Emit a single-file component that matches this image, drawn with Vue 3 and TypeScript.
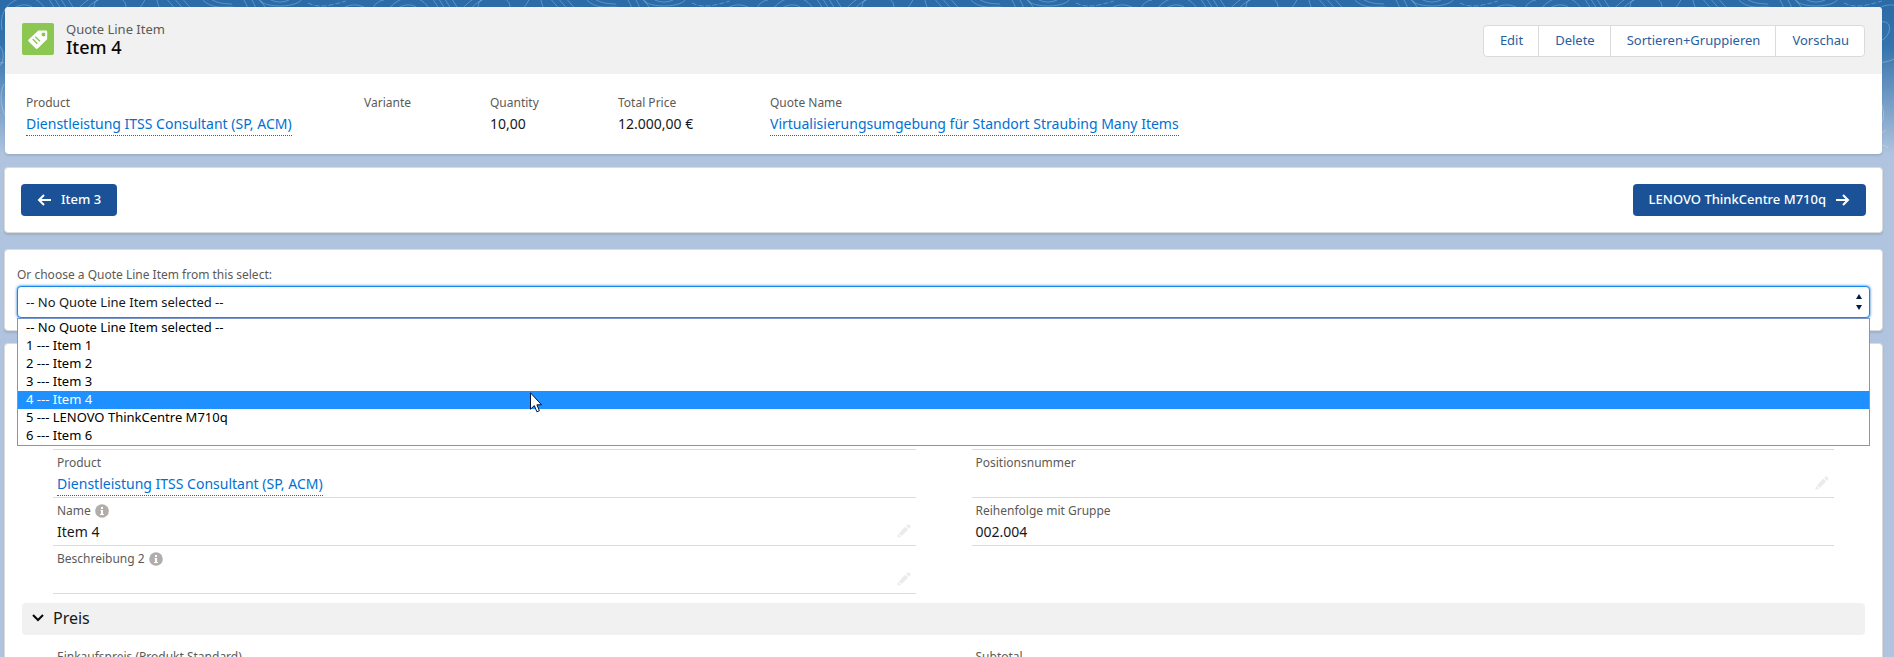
<script setup lang="ts">
import { ref } from 'vue'

interface Field { label: string; value?: string; link?: boolean; info?: boolean; edit?: boolean }

const highlights: Field[] = [
  { label: 'Product', value: 'Dienstleistung ITSS Consultant (SP, ACM)', link: true },
  { label: 'Variante' },
  { label: 'Quantity', value: '10,00' },
  { label: 'Total Price', value: '12.000,00 €' },
  { label: 'Quote Name', value: 'Virtualisierungsumgebung für Standort Straubing Many Items', link: true },
]
const actions = ['Edit', 'Delete', 'Sortieren+Gruppieren', 'Vorschau']
const options = [
  '-- No Quote Line Item selected --',
  '1 --- Item 1',
  '2 --- Item 2',
  '3 --- Item 3',
  '4 --- Item 4',
  '5 --- LENOVO ThinkCentre M710q',
  '6 --- Item 6',
]
const selected = ref(options[0])
const active = ref(4)
const columns: Field[][] = [
  [
    { label: 'Product', value: 'Dienstleistung ITSS Consultant (SP, ACM)', link: true },
    { label: 'Name', value: 'Item 4', info: true, edit: true },
    { label: 'Beschreibung 2', info: true, edit: true },
  ],
  [
    { label: 'Positionsnummer', edit: true },
    { label: 'Reihenfolge mit Gruppe', value: '002.004' },
  ],
]
</script>

<template>
  <div class="page">
    <svg class="contours" aria-hidden="true">
      <defs>
        <pattern id="topo" width="384" height="160" patternUnits="userSpaceOnUse">
          <g fill="none" stroke="#fff" stroke-opacity=".25" stroke-width="1">
            <path d="M2 30C-2 8 14-4 30-2s22 22 14 34M7 30C4 14 14 4 26 5s12 14 8 24M12 30c-2-10 4-18 10-18s8 8 6 16" />
            <path d="M47-4l10 16M53-4l10 16M59-4l10 16M66-4l10 16" />
            <ellipse cx="110" cy="6" rx="16" ry="10" /><ellipse cx="280" cy="-2" rx="22" ry="8" /><ellipse cx="280" cy="-4" rx="12" ry="6" />
            <path d="M76 12c6-8 12-14 22-16M84 12c5-6 9-10 16-13M134 12c6-4 10-8 12-16M158-4c-2 4 0 10 4 16M164-4l14 16M172-4l14 16M180-4l14 16M200-4c4 8 14 12 26 11s14 4 16 6M208-4c4 6 14 8 24 8M242-4l8 16M250-4l8 16M258-4l10 16" />
            <path d="M308 3c12 6 24 2 38-2" stroke-dasharray="5 2" />
            <path d="M340 12c4-8 20-10 28-2M372 12c2-8 6-12 14-12" />
            <path d="M-2 44c10 10 4 24-4 26M4 84C-2 96 2 116 10 122M-4 62c8 2 8 0 8 0M344 22c8-2 12 4 8 12s-12 8-14 2M338 60c8 4 14 2 22-2M338 86c8 16 12 28 8 36s-10 14-16 18M338 138l12-8M338 146c4-2 10-2 14 2" />
          </g>
        </pattern>
      </defs>
      <rect width="100%" height="160" fill="url(#topo)" />
    </svg>

    <header class="card record">
      <div class="record-top">
        <svg class="record-icon" viewBox="0 0 32 32" aria-hidden="true">
          <rect width="32" height="32" rx="2" fill="#8bc751" />
          <path fill="#fff" fill-rule="evenodd" d="M17.2 7.500h6.600c.8 0 1.400.6 1.400 1.400v6.400c0 .6-.2 1-.6 1.400l-8.900 8.900c-.6.6-1.400.6-2 0l-7-7c-.6-.6-.6-1.400 0-2l9.100-8.600c.4-.4.8-.5 1.400-.5zm4.300 2a2 2 0 1 0 0 4 2 2 0 0 0 0-4zM10.200 16.600l4.600 4.600 1-1-4.600-4.600zM12.800 14.200l4.600 4.600 1-1-4.600-4.600z" />
        </svg>
        <div class="record-title">
          <p>Quote Line Item</p>
          <h1>Item 4</h1>
        </div>
        <div class="actions">
          <button v-for="a in actions" :key="a" type="button">{{ a }}</button>
        </div>
      </div>
      <dl class="highlights">
        <div v-for="f in highlights" :key="f.label">
          <dt>{{ f.label }}</dt>
          <dd><a v-if="f.link" href="#">{{ f.value }}</a><template v-else>{{ f.value }}</template></dd>
        </div>
      </dl>
    </header>

    <nav class="card pager">
      <button type="button">
        <svg viewBox="0 0 14 14" aria-hidden="true"><path d="M14 8H2M7 3L2 8l5 5" /></svg>
        Item 3
      </button>
      <button type="button">
        LENOVO ThinkCentre M710q
        <svg viewBox="0 0 14 14" aria-hidden="true"><path d="M0 8h12M7 3l5 5-5 5" /></svg>
      </button>
    </nav>

    <section class="card chooser">
      <label for="line-item">Or choose a Quote Line Item from this select:</label>
      <div class="select-wrap">
        <select id="line-item" v-model="selected">
          <option v-for="o in options" :key="o">{{ o }}</option>
        </select>
        <svg class="arrows" viewBox="0 0 6 16" aria-hidden="true"><path d="M3 0l3 5H0zM3 16l3-5H0z" /></svg>
        <ul class="menu" role="listbox">
          <li v-for="(o, i) in options" :key="o" role="option" :aria-selected="i === active" :class="{ active: i === active }" @mouseenter="active = i">{{ o }}</li>
        </ul>
        <svg class="pointer" viewBox="0 0 12 21" aria-hidden="true">
          <path d="M.5.800v16.400l3.800-3.600 2.600 6.200 2.500-1.100-2.500-5.900h4.600z" fill="#fff" stroke="#001033" />
        </svg>
      </div>
    </section>

    <main class="card details">
      <div class="columns">
        <dl v-for="(col, c) in columns" :key="c">
          <div v-for="f in col" :key="f.label" class="row">
            <dt>
              {{ f.label }}
              <svg v-if="f.info" class="info" viewBox="0 0 14 14" aria-hidden="true">
                <circle cx="7" cy="7" r="6.800" fill="#b0adab" />
                <path d="M6 3h2v2H6zM5.500 6H8v4h1v1H5v-1h1V7h-.5z" fill="#fff" />
              </svg>
            </dt>
            <dd><a v-if="f.link" href="#">{{ f.value }}</a><template v-else>{{ f.value }}</template></dd>
            <button v-if="f.edit" type="button" class="edit" :aria-label="'Edit ' + f.label">
              <svg viewBox="0 0 14 14" aria-hidden="true"><path d="M1.800 9.200L8.300 2.700l2.900 2.900-6.500 6.500zM1.200 9.900l2.900 2.900-3.100.8c-.4.100-.7-.2-.6-.6zM9.100 1.900l1.200-1.200c.5-.5 1.100-.5 1.600 0l1.400 1.400c.5.500.5 1.100 0 1.600l-1.300 1.100z" /></svg>
            </button>
          </div>
        </dl>
      </div>
      <h2>
        <button type="button" class="section" aria-expanded="true">
          <svg viewBox="0 0 12 8" aria-hidden="true"><path d="M1 1l5 5 5-5" /></svg>
          Preis
        </button>
      </h2>
      <div class="columns price">
        <dl><div class="row"><dt>Einkaufspreis (Produkt Standard)</dt><dd></dd></div></dl>
        <dl><div class="row"><dt>Subtotal</dt><dd></dd></div></dl>
      </div>
    </main>
  </div>
</template>

<style>
html, body { height: 100%; overflow: hidden; }
#app { height: 100%; }
</style>

<style scoped>
* { box-sizing: border-box; }
.page {
  position: relative;
  min-height: 100%;
  padding: 7px 11px 0 4px;
  background: linear-gradient(#2a6ba8 0, #3473ad 45px, #b0c4df 155px);
  color: #16181b;
  font: 14px/20px "Noto Sans", sans-serif;
}
p, h1, h2, dl, dd, ul { margin: 0; padding: 0; }
button, select { font: inherit; cursor: pointer; }
.contours { position: absolute; inset: 0; width: 100%; height: 160px; }
.card {
  position: relative;
  border: 1px solid #dddbda;
  border-radius: 4px;
  background: #fff;
  box-shadow: 0 2px 2px rgba(0, 0, 0, .1);
}
a { display: inline-block; padding-bottom: 1px; color: #0070d2; text-decoration: none; border-bottom: 1px dotted #0070d2; }
dt { color: #5c5a57; font-size: 12px; line-height: 18px; }
dd { min-height: 20px; padding-top: 2px; }

.record { margin: 0 1px; border: 0; height: 147px; }
.record-top { display: flex; height: 67px; padding: 16px 17px 0; background: #f1f1f1; border-radius: 4px 4px 0 0; }
.record-icon { width: 32px; height: 32px; }
.record-title { margin: -3px 0 0 12px; flex: 1; }
.record-title p { font-size: 13px; line-height: 18px; color: #5c5a57; }
.record-title h1 { font-size: 18px; line-height: 18px; font-weight: 500; color: #080707; }
.actions { display: flex; margin-top: 2px; height: 32px; }
.actions button { padding: 0 15px 2px 16px; border: 1px solid #dddbda; margin-left: -1px; background: #fff; color: #2a5d9e; font-size: 13px; }
.actions button:first-child { border-radius: 4px 0 0 4px; }
.actions button:last-child { border-radius: 0 4px 4px 0; }
.highlights { display: grid; grid-template-columns: 338px 126px 128px 152px 1fr; padding: 20px 21px; }

.pager { display: flex; justify-content: space-between; margin-top: 13px; padding: 16px; }
.pager button { display: flex; align-items: center; gap: 10px; height: 32px; padding: 0 16px 2px; border: 0; border-radius: 4px; background: #1b5297; color: #fff; font-size: 13px; font-weight: 500; }
.pager svg { width: 14px; height: 14px; fill: none; stroke: #fff; stroke-width: 2; }

.chooser { z-index: 1; margin-top: 16px; padding: 16px 12px 12px; }
.chooser label { display: block; padding-bottom: 2px; color: #5c5a57; font-size: 12px; line-height: 18px; }
.select-wrap { position: relative; }
select { display: block; appearance: none; width: 100%; height: 32px; padding: 0 8px 1px; border: 1px solid #1589ee; border-radius: 4px; outline: 0; box-shadow: 0 0 3px #0070d2; background: #fff; color: #16181b; font-size: 13px; }
.arrows { position: absolute; right: 8px; top: 8px; width: 6px; height: 16px; fill: #061c3f; pointer-events: none; }
.menu { position: absolute; top: 32px; left: 0; right: 0; list-style: none; border: 1px solid #7a96cf; background: #fff; font-size: 13px; line-height: 16px; color: #000; }
.menu li { padding: 0 8px 2px; }
.menu .active { background: #1e90ff; color: #fff; }
.pointer { position: absolute; left: 513px; top: 106px; width: 12px; height: 21px; }

.details { margin-top: 12px; padding: 105px 17px 0; }
.columns { display: grid; grid-template-columns: 1fr 1fr; gap: 56px; padding: 0 31px; }
.columns dl { border-top: 1px solid #dddbda; }
.row { position: relative; height: 48px; padding: 4px; border-bottom: 1px solid #dddbda; }
.row dt { display: flex; align-items: center; gap: 4px; }
.info { width: 14px; height: 14px; }
.edit { position: absolute; right: 5px; bottom: 7px; width: 14px; height: 14px; padding: 0; border: 0; background: none; }
.edit svg { display: block; fill: #ecebea; }
.section { display: flex; align-items: center; gap: 9px; width: 100%; height: 32px; margin-top: 9px; padding: 0 10px 2px; border: 0; border-radius: 4px; background: #f1f1f1; color: #16181b; font-size: 16px; font-weight: 400; }
.section svg { width: 12px; height: 8px; fill: none; stroke: #080707; stroke-width: 2; }
.price { padding-top: 9px; }
.price dl { border: 0; }
</style>
